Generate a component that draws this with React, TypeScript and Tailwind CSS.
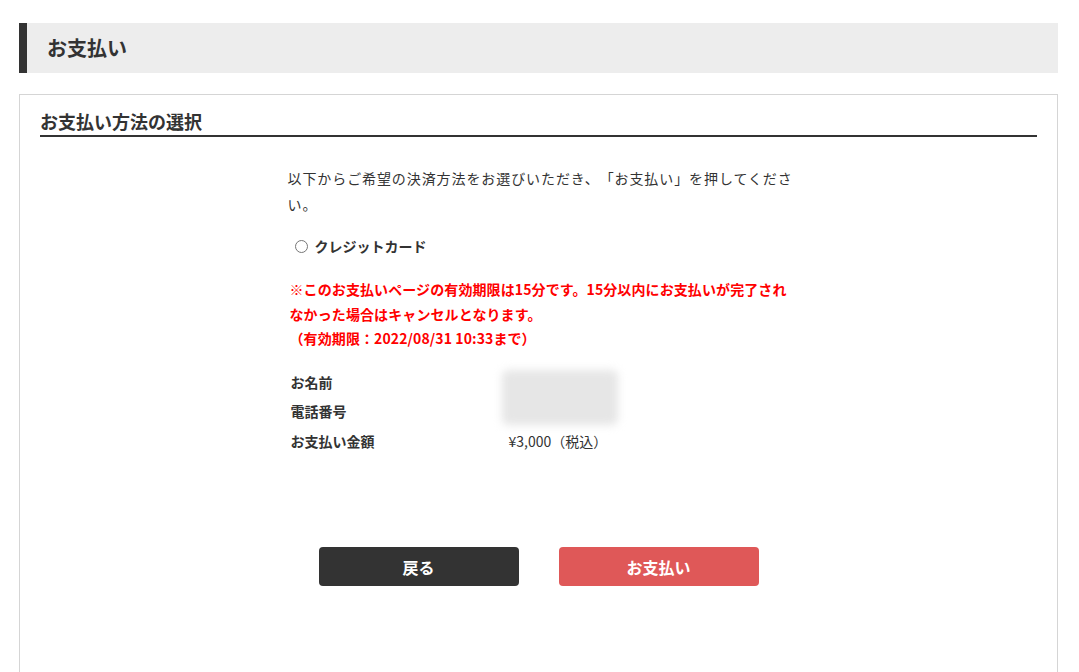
export default function App() {
  return (
    <div
      className="min-h-screen bg-white pl-[19px] pr-[21px] pt-[23px] text-[#333]"
      style={{ fontFamily: '"Noto Sans CJK JP", "Noto Sans", sans-serif' }}
    >
      {/* Page title */}
      <div className="flex h-[50px] items-center border-l-[8px] border-[#333] bg-[#ededed] pl-[20px]">
        <h1 className="text-[20px] font-bold">お支払い</h1>
      </div>

      {/* Panel */}
      <div className="mt-[21px] h-[600px] border border-[#d5d5d5] px-[20px] pt-[12px]">
        <h2 className="border-b-2 border-[#333] pb-0 text-[18px] font-bold leading-[28px]">
          お支払い方法の選択
        </h2>

        <div className="mx-auto mt-[28px] w-[504px] text-[14px] [text-spacing-trim:space-all]">
          <p className="mr-[-6px] pl-[1px] leading-[26px] tracking-[0.065em]">
            以下からご希望の決済方法をお選びいただき、「お支払い」を押してください。
          </p>

          <label className="mt-[19px] flex items-center gap-[7px] pl-[8px] font-bold leading-[20px]">
            <span className="inline-block h-[13px] w-[13px] rounded-full border border-[#767676] bg-white" />
            クレジットカード
          </label>

          <p className="mt-[21px] pl-[3px] font-bold leading-[24.5px] tracking-[0.1px] text-[#ff0000]">
            ※このお支払いページの有効期限は15分です。15分以内にお支払いが完了されなかった場合はキャンセルとなります。
            <br />
            （有効期限：2022/08/31 10:33まで）
          </p>

          <div className="mt-[17px] grid grid-cols-[218px_1fr] pl-[4px] leading-[29.5px]">
            <div className="font-bold">お名前</div>
            <div className="row-span-2 flex items-center">
              <div className="ml-[-7px] h-[55px] w-[116px] rounded-[6px] bg-[#e6e6e6] blur-[4px]" />
            </div>
            <div className="font-bold">電話番号</div>
            <div className="font-bold">お支払い金額</div>
            <div>¥3,000（税込）</div>
          </div>
        </div>

        <div className="mt-[91px] flex justify-center gap-[40px]">
          <button className="h-[39px] w-[200px] rounded-[4px] bg-[#333] text-[16px] font-bold text-white">
            戻る
          </button>
          <button className="h-[39px] w-[200px] rounded-[4px] bg-[#df5858] text-[16px] font-bold text-white">
            お支払い
          </button>
        </div>
      </div>
    </div>
  );
}
